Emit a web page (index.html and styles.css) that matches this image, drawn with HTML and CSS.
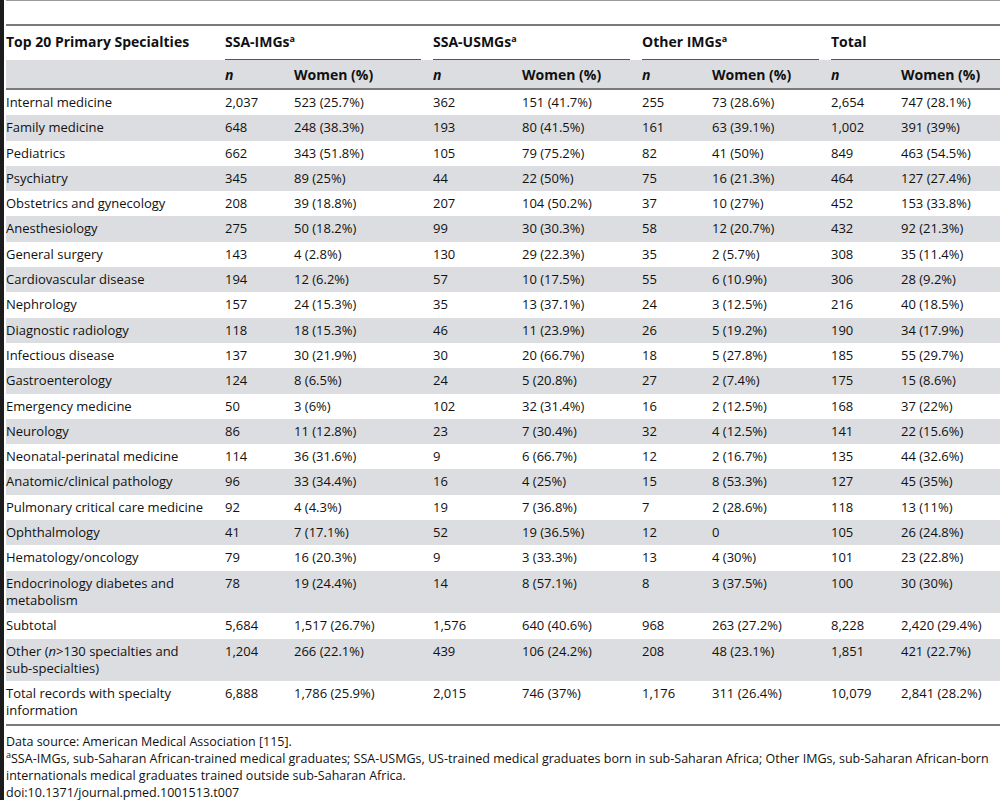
FILE: index.html
```html
<!DOCTYPE html>
<html lang="en">
<head>
  <meta charset="UTF-8">
  <meta name="viewport" content="width=device-width, initial-scale=1.0">
  <title>Table 7. Top 20 primary specialties</title>
  <link rel="stylesheet" href="styles.css">
</head>
<body>
  <div class="top-rule"></div>

  <!-- Table Section -->
  <table class="data-table">
    <colgroup>
      <col class="c-label">
      <col class="c-n1">
      <col class="c-w1">
      <col class="c-n2">
      <col class="c-w2">
      <col class="c-n3">
      <col class="c-w3">
      <col class="c-n4">
      <col class="c-w4">
    </colgroup>
    <thead>
      <tr class="group-row">
        <th>Top 20 Primary Specialties</th>
        <th colspan="2" class="group"><div class="group-label">SSA-IMGs<sup>a</sup></div></th>
        <th colspan="2" class="group"><div class="group-label">SSA-USMGs<sup>a</sup></div></th>
        <th colspan="2" class="group"><div class="group-label">Other IMGs<sup>a</sup></div></th>
        <th colspan="2" class="group last"><div class="group-label">Total</div></th>
      </tr>
      <tr class="sub-row">
        <th></th>
        <th><i>n</i></th>
        <th>Women (%)</th>
        <th><i>n</i></th>
        <th>Women (%)</th>
        <th><i>n</i></th>
        <th>Women (%)</th>
        <th><i>n</i></th>
        <th>Women (%)</th>
      </tr>
    </thead>
    <tbody>
      <tr><td>Internal medicine</td><td>2,037</td><td>523 (25.7%)</td><td>362</td><td>151 (41.7%)</td><td>255</td><td>73 (28.6%)</td><td>2,654</td><td>747 (28.1%)</td></tr>
      <tr><td>Family medicine</td><td>648</td><td>248 (38.3%)</td><td>193</td><td>80 (41.5%)</td><td>161</td><td>63 (39.1%)</td><td>1,002</td><td>391 (39%)</td></tr>
      <tr><td>Pediatrics</td><td>662</td><td>343 (51.8%)</td><td>105</td><td>79 (75.2%)</td><td>82</td><td>41 (50%)</td><td>849</td><td>463 (54.5%)</td></tr>
      <tr><td>Psychiatry</td><td>345</td><td>89 (25%)</td><td>44</td><td>22 (50%)</td><td>75</td><td>16 (21.3%)</td><td>464</td><td>127 (27.4%)</td></tr>
      <tr><td>Obstetrics and gynecology</td><td>208</td><td>39 (18.8%)</td><td>207</td><td>104 (50.2%)</td><td>37</td><td>10 (27%)</td><td>452</td><td>153 (33.8%)</td></tr>
      <tr><td>Anesthesiology</td><td>275</td><td>50 (18.2%)</td><td>99</td><td>30 (30.3%)</td><td>58</td><td>12 (20.7%)</td><td>432</td><td>92 (21.3%)</td></tr>
      <tr><td>General surgery</td><td>143</td><td>4 (2.8%)</td><td>130</td><td>29 (22.3%)</td><td>35</td><td>2 (5.7%)</td><td>308</td><td>35 (11.4%)</td></tr>
      <tr><td>Cardiovascular disease</td><td>194</td><td>12 (6.2%)</td><td>57</td><td>10 (17.5%)</td><td>55</td><td>6 (10.9%)</td><td>306</td><td>28 (9.2%)</td></tr>
      <tr><td>Nephrology</td><td>157</td><td>24 (15.3%)</td><td>35</td><td>13 (37.1%)</td><td>24</td><td>3 (12.5%)</td><td>216</td><td>40 (18.5%)</td></tr>
      <tr><td>Diagnostic radiology</td><td>118</td><td>18 (15.3%)</td><td>46</td><td>11 (23.9%)</td><td>26</td><td>5 (19.2%)</td><td>190</td><td>34 (17.9%)</td></tr>
      <tr><td>Infectious disease</td><td>137</td><td>30 (21.9%)</td><td>30</td><td>20 (66.7%)</td><td>18</td><td>5 (27.8%)</td><td>185</td><td>55 (29.7%)</td></tr>
      <tr><td>Gastroenterology</td><td>124</td><td>8 (6.5%)</td><td>24</td><td>5 (20.8%)</td><td>27</td><td>2 (7.4%)</td><td>175</td><td>15 (8.6%)</td></tr>
      <tr><td>Emergency medicine</td><td>50</td><td>3 (6%)</td><td>102</td><td>32 (31.4%)</td><td>16</td><td>2 (12.5%)</td><td>168</td><td>37 (22%)</td></tr>
      <tr><td>Neurology</td><td>86</td><td>11 (12.8%)</td><td>23</td><td>7 (30.4%)</td><td>32</td><td>4 (12.5%)</td><td>141</td><td>22 (15.6%)</td></tr>
      <tr><td>Neonatal-perinatal medicine</td><td>114</td><td>36 (31.6%)</td><td>9</td><td>6 (66.7%)</td><td>12</td><td>2 (16.7%)</td><td>135</td><td>44 (32.6%)</td></tr>
      <tr><td>Anatomic/clinical pathology</td><td>96</td><td>33 (34.4%)</td><td>16</td><td>4 (25%)</td><td>15</td><td>8 (53.3%)</td><td>127</td><td>45 (35%)</td></tr>
      <tr><td>Pulmonary critical care medicine</td><td>92</td><td>4 (4.3%)</td><td>19</td><td>7 (36.8%)</td><td>7</td><td>2 (28.6%)</td><td>118</td><td>13 (11%)</td></tr>
      <tr><td>Ophthalmology</td><td>41</td><td>7 (17.1%)</td><td>52</td><td>19 (36.5%)</td><td>12</td><td>0</td><td>105</td><td>26 (24.8%)</td></tr>
      <tr><td>Hematology/oncology</td><td>79</td><td>16 (20.3%)</td><td>9</td><td>3 (33.3%)</td><td>13</td><td>4 (30%)</td><td>101</td><td>23 (22.8%)</td></tr>
      <tr><td>Endocrinology diabetes and metabolism</td><td>78</td><td>19 (24.4%)</td><td>14</td><td>8 (57.1%)</td><td>8</td><td>3 (37.5%)</td><td>100</td><td>30 (30%)</td></tr>
      <tr><td>Subtotal</td><td>5,684</td><td>1,517 (26.7%)</td><td>1,576</td><td>640 (40.6%)</td><td>968</td><td>263 (27.2%)</td><td>8,228</td><td>2,420 (29.4%)</td></tr>
      <tr><td>Other (<i>n</i>&gt;130 specialties and <span class="nowrap">sub-specialties)</span></td><td>1,204</td><td>266 (22.1%)</td><td>439</td><td>106 (24.2%)</td><td>208</td><td>48 (23.1%)</td><td>1,851</td><td>421 (22.7%)</td></tr>
      <tr><td>Total records with specialty information</td><td>6,888</td><td>1,786 (25.9%)</td><td>2,015</td><td>746 (37%)</td><td>1,176</td><td>311 (26.4%)</td><td>10,079</td><td>2,841 (28.2%)</td></tr>
    </tbody>
  </table>

  <!-- Footnotes -->
  <div class="table-notes">
    <p>Data source: American Medical Association [115].</p>
    <p><sup>a</sup>SSA-IMGs, sub-Saharan African-trained medical graduates; SSA-USMGs, US-trained medical graduates born in sub-Saharan Africa; Other IMGs, sub-Saharan African-born<br>internationals medical graduates trained outside sub-Saharan Africa.</p>
    <p>doi:10.1371/journal.pmed.1001513.t007</p>
  </div>
</body>
</html>
```

FILE: styles.css
```css
body {
  font-family: "Open Sans", "Liberation Sans", sans-serif;
  font-size: 13px;
  color: #111111;
  background-color: #ffffff;
  margin: 0;
  padding: 0 0 0 2px;
  border-left: 4px solid #1c1c1c;
  min-height: 800px;
  box-sizing: border-box;
  overflow: hidden;
}
.top-rule {
  border-top: 1px solid #9a9a9a;
  height: 23px;
}
.data-table {
  width: 994px;
  table-layout: fixed;
  border-collapse: collapse;
  border-top: 2px solid #7a7a7a;
  border-bottom: 2px solid #7a7a7a;
}
.c-label { width: 219px; }
.c-n1 { width: 69px; }
.c-w1 { width: 139px; }
.c-n2 { width: 89px; }
.c-w2 { width: 120px; }
.c-n3 { width: 70px; }
.c-w3 { width: 119px; }
.c-n4 { width: 70px; }
.c-w4 { width: 99px; }
th, td {
  text-align: left;
  vertical-align: top;
  padding: 4px 10px 4px 0;
  line-height: 17.3px;
}
th {
  font-weight: 700;
  font-size: 14px;
}
th i {
  font-style: italic;
}
.nowrap {
  white-space: nowrap;
}
sup {
  font-size: 9px;
  line-height: 0;
  vertical-align: 5px;
}
.group-row th {
  padding: 7px 12px 9px 0;
  line-height: 17px;
}
.group-row th.group {
  padding-bottom: 0;
}
.group-row th.last {
  padding-right: 0;
}
.group-label {
  padding-bottom: 9px;
  border-bottom: 1px solid #555555;
}
.sub-row th {
  background-color: #dcdde0;
  padding: 6px 12px 5px 0;
  line-height: 17px;
  border-bottom: 2px solid #7a7a7a;
}
tbody tr:nth-child(even) td {
  background-color: #dcdde0;
}
.table-notes {
  margin-top: 7px;
  font-size: 12.5px;
  line-height: 17px;
}
.table-notes p {
  margin: 0;
  white-space: nowrap;
}
.table-notes sup {
  font-size: 9px;
  vertical-align: 5px;
}
```
